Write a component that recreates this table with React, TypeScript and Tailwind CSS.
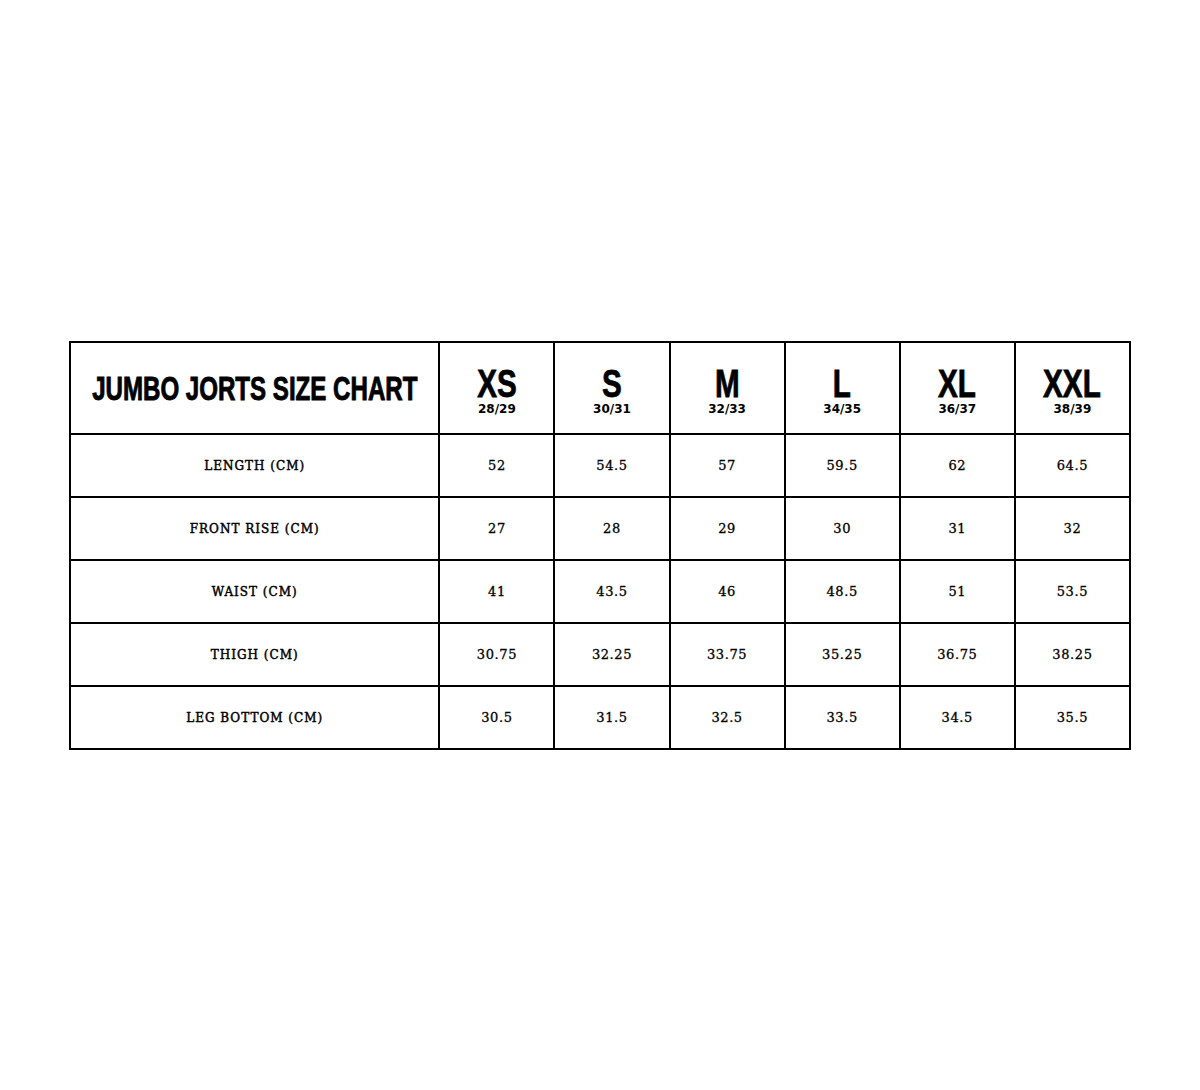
const sizes = [
  { name: "XS", waist: "28/29" },
  { name: "S", waist: "30/31" },
  { name: "M", waist: "32/33" },
  { name: "L", waist: "34/35" },
  { name: "XL", waist: "36/37" },
  { name: "XXL", waist: "38/39" },
];

const rows = [
  { label: "LENGTH (CM)", values: ["52", "54.5", "57", "59.5", "62", "64.5"] },
  { label: "FRONT RISE (CM)", values: ["27", "28", "29", "30", "31", "32"] },
  { label: "WAIST (CM)", values: ["41", "43.5", "46", "48.5", "51", "53.5"] },
  { label: "THIGH (CM)", values: ["30.75", "32.25", "33.75", "35.25", "36.75", "38.25"] },
  { label: "LEG BOTTOM (CM)", values: ["30.5", "31.5", "32.5", "33.5", "34.5", "35.5"] },
];

const headFont = "font-['Liberation_Sans',sans-serif]";
const bodyFont = "font-['DejaVu_Serif',serif]";

export default function App() {
  return (
    <div className="w-[1200px] h-[1090px] bg-white flex items-start justify-center pt-[341px]">
      <table className="table-fixed w-[1062px] border-collapse border-2 border-black text-black">
        <thead>
          <tr className="h-[92px]">
            <th className="w-[369px] border-2 border-black p-0">
              <div className="flex justify-center pt-[1px]">
                <span
                  className={`${headFont} inline-block whitespace-nowrap font-bold text-[33px] leading-none scale-x-[0.73] [-webkit-text-stroke:0.9px_black]`}
                >
                  JUMBO JORTS SIZE CHART
                </span>
              </div>
            </th>
            {sizes.map((s) => (
              <th key={s.name} className="w-[115px] border-2 border-black p-0">
                <div className="flex flex-col items-center pt-[8px]">
                  <span
                    className={`${headFont} inline-block whitespace-nowrap font-bold text-[39px] leading-[30px] scale-x-[0.76] [-webkit-text-stroke:0.8px_black]`}
                  >
                    {s.name}
                  </span>
                  <span className="font-['DejaVu_Sans',sans-serif] font-bold text-[12px] leading-[14px] mt-[3px]">
                    {s.waist}
                  </span>
                </div>
              </th>
            ))}
          </tr>
        </thead>
        <tbody>
          {rows.map((r) => (
            <tr key={r.label} className="h-[63px]">
              <td
                className={`${bodyFont} border-2 border-black text-center text-[12px] tracking-[1px] p-0 [-webkit-text-stroke:0.45px_black]`}
              >
                {r.label}
              </td>
              {r.values.map((v, i) => (
                <td
                  key={i}
                  className={`${bodyFont} border-2 border-black text-center text-[13px] tracking-[0.6px] p-0 [-webkit-text-stroke:0.3px_black]`}
                >
                  {v}
                </td>
              ))}
            </tr>
          ))}
        </tbody>
      </table>
    </div>
  );
}
